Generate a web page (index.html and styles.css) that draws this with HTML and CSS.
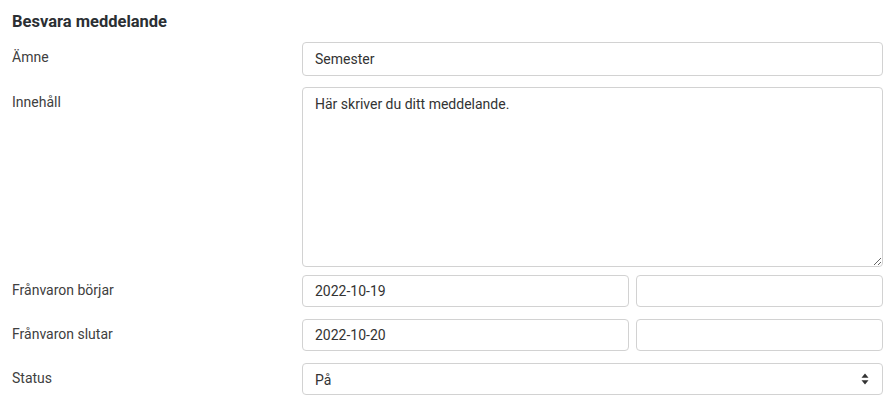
FILE: index.html
```html
<!DOCTYPE html>
<html lang="sv">
<head>
<meta charset="utf-8">
<title>Besvara meddelande</title>
<link rel="stylesheet" href="styles.css">
</head>
<body>
<div class="panel">
  <h2 class="title">Besvara meddelande</h2>
  <form class="form">
    <div class="row row-first">
      <label class="label">Ämne</label>
      <div class="field"><input class="control" type="text" value="Semester"></div>
    </div>
    <div class="row row-area">
      <label class="label">Innehåll</label>
      <div class="field"><textarea class="control area">Här skriver du ditt meddelande.</textarea></div>
    </div>
    <div class="row row-date">
      <label class="label">Frånvaron börjar</label>
      <div class="field split">
        <input class="control date" type="text" value="2022-10-19">
        <input class="control time" type="text" value="">
      </div>
    </div>
    <div class="row row-date">
      <label class="label">Frånvaron slutar</label>
      <div class="field split">
        <input class="control date" type="text" value="2022-10-20">
        <input class="control time" type="text" value="">
      </div>
    </div>
    <div class="row row-date">
      <label class="label">Status</label>
      <div class="field select-wrap">
        <select class="control select">
          <option>På</option>
          <option>Av</option>
        </select>
        <svg class="caret" width="8" height="12" viewBox="0 0 8 12"><path d="M4 0.5 L7.5 4.8 L0.5 4.8 Z M0.5 7.2 L7.5 7.2 L4 11.5 Z" fill="#333"/></svg>
      </div>
    </div>
  </form>
</div>
</body>
</html>
```
FILE: styles.css
```css
* { box-sizing: border-box; }
html, body { margin: 0; padding: 0; background: #fff; }
body {
  font-family: Roboto, "Noto Sans", Arial, sans-serif;
  color: #333;
  font-size: 14px;
}
.panel {
  width: 889px;
  padding: 12px 6px 0 12px;
}
.title {
  margin: 0 0 10px;
  font-size: 16.5px;
  line-height: 20px;
  font-weight: 700;
  color: #2b2f33;
}
.form { display: flex; flex-direction: column; }
.row {
  display: grid;
  grid-template-columns: 290px 581px;
}
.row-first { margin-bottom: 11px; }
.row-area { margin-bottom: 8px; }
.row-date { margin-bottom: 12px; }
.label {
  padding-top: 5px;
  font-size: 14px;
  line-height: 20px;
  color: #404040;
}
.field { display: flex; }
.split { gap: 7px; }
.control {
  width: 100%;
  height: 34px;
  padding: 6px 12px;
  border: 1px solid #d2d2d2;
  border-radius: 4px;
  background: #fff;
  font-family: Roboto, "Noto Sans", Arial, sans-serif;
  font-size: 14px;
  line-height: 20px;
  color: #333;
  outline: none;
}
.area {
  height: 180px;
  padding-top: 6px;
  resize: vertical;
  display: block;
}
.row-date .control { height: 32px; }
.date { width: 327px; flex: none; }
.time { width: 247px; flex: none; }
.select-wrap { position: relative; }
.select {
  appearance: none;
  -webkit-appearance: none;
  padding-right: 30px;
}
.caret {
  position: absolute;
  right: 14px;
  top: 10px;
}
```
